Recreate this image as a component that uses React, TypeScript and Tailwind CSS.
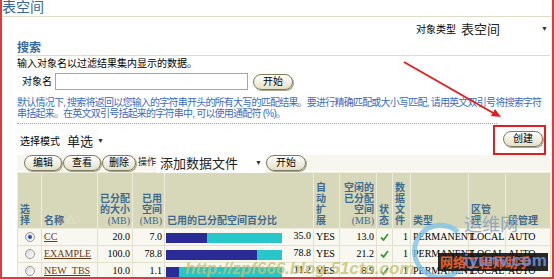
import React from "react";

const Btn = ({ children, px = "px-[9px]" }: { children: React.ReactNode; px?: string }) => (
  <button className={`flex h-[16px] items-center rounded-full border border-[#7d7b5f] bg-linear-to-b from-white to-[#e4e0c8] text-[10px] leading-none text-black shadow-[1px_1px_0_#a8a68a] ${px}`}>
    {children}
  </button>
);

const Select = ({ label, w, size = "text-[13px]" }: { label: string; w: string; size?: string }) => (
  <div className={`flex h-[19px] items-center justify-between bg-white pl-[3px] pr-[3px] ${w}`}>
    <span className={`${size} leading-none text-[#222]`}>{label}</span>
    <span className="text-[7px] text-[#333]">▼</span>
  </div>
);

const Radio = ({ on }: { on?: boolean }) => (
  <span className="flex h-[10px] w-[10px] items-center justify-center rounded-full border border-[#9a9a9a] bg-linear-to-br from-[#d8d8d8] to-white">
    {on && <span className="h-[4px] w-[4px] rounded-full bg-[#2a4fb0]" />}
  </span>
);

const Check = () => (
  <svg width="9" height="8" viewBox="0 0 9 8">
    <path d="M1 4.5 L3.5 7 L8 1" fill="none" stroke="#3f9a35" strokeWidth="1.8" />
  </svg>
);

const rows = [
  { name: "CC", size: "20.0", used: "7.0", pct: 35.0, pctText: "35.0", free: "13.0", on: true },
  { name: "EXAMPLE", size: "100.0", used: "78.8", pct: 78.8, pctText: "78.8", free: "21.2" },
  { name: "NEW_TBS", size: "10.0", used: "1.1", pct: 11.2, pctText: "11.2", free: "8.9" },
];

const th = "border border-[#ecebdc] px-[2px] pb-[2px] align-bottom font-bold text-[#3d6b8f]";
const td = "border border-[#e2e1cc] px-[2px] align-middle";

export default function App() {
  return (
    <div className="relative h-[279px] w-[554px] overflow-hidden border-x-2 border-b-2 border-[#e03a3a] bg-white font-['Liberation_Sans','Noto_Sans_CJK_SC',sans-serif] text-black">
      {/* title */}
      <div className="h-[17px] border-b border-[#dddccb] text-[14px] leading-[15px] text-[#336699]">表空间</div>

      {/* object type */}
      <div className="flex h-[24px] items-center justify-end gap-[2px] pr-[1px]">
        <span className="text-[10px]">对象类型</span>
        <Select label="表空间" w="w-[93px]" />
      </div>

      <div className="pl-[15px] pr-[2px]">
        {/* search */}
        <div className="h-[15px] border-b border-[#dddccb] text-[12px] font-bold leading-[14px] text-[#3a6a99]">搜索</div>
        <div className="mt-[2px] h-[12px] text-[10px] leading-[12px]">输入对象名以过滤结果集内显示的数据。</div>
        <div className="mt-[2px] flex h-[19px] items-center">
          <span className="w-[38px] pl-[5px] text-[10px]">对象名</span>
          <div className="h-[17px] w-[193px] border border-[#a5a5a5] bg-white" />
          <div className="ml-[5px]">
            <Btn>开始</Btn>
          </div>
        </div>
        <div className="mt-[6px] whitespace-nowrap text-[10px] leading-[11px] tracking-[-0.78px] text-[#3a6cc4]">
          默认情况下, 搜索将返回以您输入的字符串开头的所有大写的匹配结果。要进行精确匹配或大小写匹配, 请用英文双引号将搜索字符
          <br />
          串括起来。在英文双引号括起来的字符串中, 可以使用通配符 (%)。
        </div>
        <div className="mt-[4px] w-[480px] border-b border-dotted border-[#a0a0a0]" />

        {/* select mode + create */}
        <div className="flex h-[31px] items-center justify-between">
          <div className="flex items-center gap-[4px] pl-[3px] pt-[3px]">
            <span className="text-[10px]">选择模式</span>
            <Select label="单选" w="w-[43px]" />
          </div>
          <div className="mr-[4px] mt-[1px] border-2 border-[#e02020] pb-[6px] pl-[8px] pr-[1px] pt-[4px]">
            <Btn>创建</Btn>
          </div>
        </div>

        {/* toolbar */}
        <div className="flex h-[16px] items-center gap-[1px] bg-[#f7f7ef] pl-[7px]">
          <Btn px="px-[8px]">编辑</Btn>
          <Btn px="px-[8px]">查看</Btn>
          <Btn px="px-[6px]">删除</Btn>
          <span className="ml-[1px] text-[9px] text-[#222]">操作</span>
          <Select label="添加数据文件" w="w-[108px]" />
          <Btn>开始</Btn>
        </div>

        {/* table */}
        <table className="mt-[1px] w-[533px] table-fixed border-collapse text-[10px]">
          <colgroup>
            <col className="w-[24px]" />
            <col className="w-[56px]" />
            <col className="w-[35px]" />
            <col className="w-[32px]" />
            <col className="w-[149px]" />
            <col className="w-[26px]" />
            <col className="w-[37px]" />
            <col className="w-[16px]" />
            <col className="w-[18px]" />
            <col className="w-[58px]" />
            <col className="w-[37px]" />
            <col className="w-[45px]" />
          </colgroup>
          <thead>
            <tr className="h-[56px] bg-[#d7d8ba] leading-[11px]">
              <th className={`${th} text-left`}>选择</th>
              <th className={`${th} text-left`}>
                名称<span className="ml-[2px] font-normal text-[#e8e8cc]">△</span>
              </th>
              <th className={`${th} text-right`}>
                已分配
                <br />
                的大小
                <br />
                <span className="font-['Liberation_Serif'] font-normal">(MB)</span>
              </th>
              <th className={`${th} text-right`}>
                已用
                <br />
                空间
                <br />
                <span className="font-['Liberation_Serif'] font-normal">(MB)</span>
              </th>
              <th className={`${th} text-left`}>已用的已分配空间百分比</th>
              <th className={`${th} text-left`}>
                自<br />动<br />扩<br />展
              </th>
              <th className={`${th} text-right`}>
                空闲的
                <br />
                已分配
                <br />
                空间
                <br />
                <span className="font-['Liberation_Serif'] font-normal">(MB)</span>
              </th>
              <th className={`${th} text-left`}>
                状<br />态
              </th>
              <th className={`${th} text-left`}>
                数<br />据<br />文<br />件
              </th>
              <th className={`${th} text-left`}>类型</th>
              <th className={`${th} text-left`}>
                区管
                <br />理
              </th>
              <th className={`${th} text-left`}>段管理</th>
            </tr>
          </thead>
          <tbody className="font-['Liberation_Serif',serif] leading-[12px]">
            {rows.map((r) => (
              <tr key={r.name} className="h-[17px] bg-[#f8f8f0]">
                <td className={td}>
                  <div className="flex justify-center">
                    <Radio on={r.on} />
                  </div>
                </td>
                <td className={td}>
                  <span className="text-[#6b3a12] underline">{r.name}</span>
                </td>
                <td className={`${td} text-right`}>{r.size}</td>
                <td className={`${td} text-right`}>{r.used}</td>
                <td className={`${td} pl-[1px]`}>
                  <div className="flex items-start justify-between">
                    <div className="mt-[1px] h-[10px] w-[116px] bg-[#27c6c9]">
                      <div className="h-full bg-[#2b2b96]" style={{ width: `${r.pct}%` }} />
                    </div>
                    <span className="-mt-[2px]">{r.pctText}</span>
                  </div>
                </td>
                <td className={td}>YES</td>
                <td className={`${td} text-right`}>{r.free}</td>
                <td className={td}>
                  <div className="flex justify-center">
                    <Check />
                  </div>
                </td>
                <td className={`${td} text-right`}>1</td>
                <td className={`${td} overflow-visible whitespace-nowrap`}>PERMANENT</td>
                <td className={td}>LOCAL</td>
                <td className={td}>AUTO</td>
              </tr>
            ))}
          </tbody>
        </table>
      </div>

      {/* red annotation arrow */}
      <svg className="pointer-events-none absolute left-0 top-0" width="554" height="279">
        <line x1="402" y1="62" x2="493" y2="114" stroke="#e02020" strokeWidth="2" />
        <polygon points="499,117 489,116 493,109" fill="#e02020" />
      </svg>

      {/* watermarks */}
      <div className="pointer-events-none absolute left-[183px] top-[256px] text-[17px] font-bold italic text-[#c2c272]/80">
        http://zpf666.blog.51cto.com
      </div>
      <svg className="pointer-events-none absolute left-[398px] top-[222px]" width="80" height="57">
        <path d="M58 10 A26 26 0 1 0 62 44" fill="none" stroke="#7fc4e6" strokeWidth="5" opacity="0.8" />
      </svg>
      <div className="pointer-events-none absolute left-[462px] top-[216px] text-[18px] leading-none text-[#8aa2bd]/90">运维网</div>
      <div className="pointer-events-none absolute left-[436px] top-[253px] flex h-[18px] w-[110px] items-center bg-[#111]/90 pl-[2px] text-[13px] font-bold leading-none text-[#e0602a]">
        网络工程师助手
      </div>
      <div className="pointer-events-none absolute left-[462px] top-[252px] text-[17px] font-bold leading-none text-[#6f8fe0]/90">iyunv.com</div>
    </div>
  );
}
